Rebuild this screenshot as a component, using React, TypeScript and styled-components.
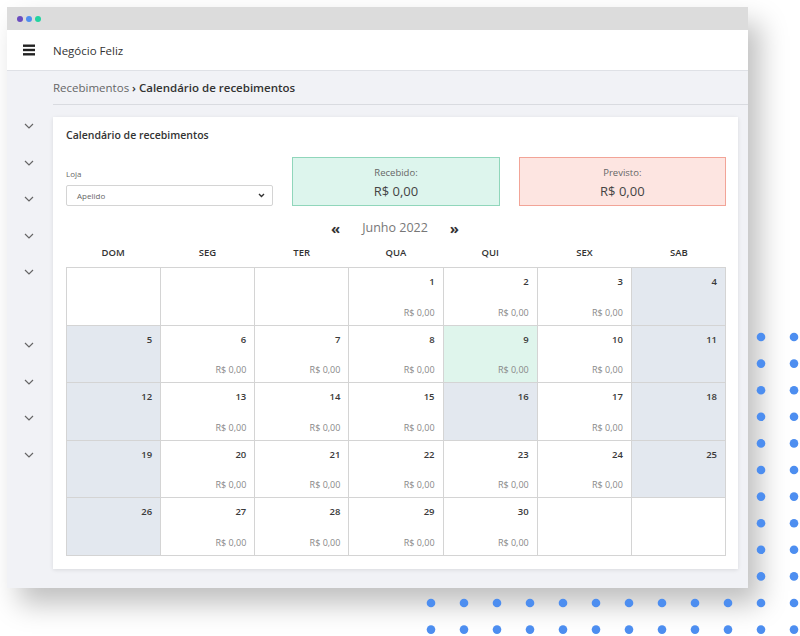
import React from "react";
import styled, { createGlobalStyle } from "styled-components";

const GlobalStyle = createGlobalStyle`
  html, body {
    margin: 0;
    padding: 0;
    background: #ffffff;
  }
  body {
    font-family: "Open Sans", "Liberation Sans", sans-serif;
    color: #333;
  }
  * {
    box-sizing: border-box;
  }
`;

const Stage = styled.div`
  position: relative;
  width: 800px;
  height: 636px;
  padding: 7px;
  overflow: hidden;
  isolation: isolate;
`;

const Dots = styled.svg`
  position: absolute;
  left: 426px;
  top: 332px;
`;

const Window = styled.div`
  position: relative;
  width: 741px;
  height: 581px;
  display: flex;
  flex-direction: column;
  background: #f1f2f6;

  &::before {
    content: "";
    position: absolute;
    inset: 0;
    z-index: -1;
    box-shadow: 12px 16px 26px rgba(0, 0, 0, 0.25);
  }
`;

const TitleBar = styled.div`
  height: 23px;
  background: #dcdcdc;
  display: flex;
  align-items: center;
  gap: 3px;
  padding-left: 10px;
`;

const Light = styled.span<{ $color: string }>`
  width: 6px;
  height: 6px;
  border-radius: 50%;
  background: ${(p) => p.$color};
`;

const Header = styled.div`
  height: 41px;
  background: #ffffff;
  border-bottom: 1px solid #dfe1e6;
  display: flex;
  align-items: center;
`;

const BurgerSlot = styled.div`
  width: 46px;
  display: flex;
  justify-content: center;
  padding-right: 2px;
`;

const Brand = styled.div`
  font-size: 11.5px;
  color: #333;
`;

const Body = styled.div`
  flex: 1;
  display: grid;
  grid-template-columns: 46px 1fr;
`;

const Sidebar = styled.div`
  padding-top: 37px;
  display: flex;
  flex-direction: column;
`;

const SideItem = styled.div`
  height: 36.5px;
  display: flex;
  align-items: center;
  justify-content: center;
  padding-right: 3px;
`;

const Main = styled.div`
  display: flex;
  flex-direction: column;
`;

const Breadcrumb = styled.div`
  height: 34px;
  border-bottom: 1px solid #d9dbe0;
  display: flex;
  align-items: center;
  font-size: 11.5px;
  color: #666;
  padding-bottom: 1px;

  b {
    font-weight: 600;
    color: #333;
  }
`;

const Card = styled.div`
  margin: 12px 10px 0 0;
  background: #ffffff;
  box-shadow: 0 1px 4px rgba(0, 0, 0, 0.1);
  padding: 10px 12px 13px 13px;
`;

const Title = styled.div`
  font-size: 10.5px;
  font-weight: 600;
  line-height: 16px;
  color: #333;
  margin-bottom: 14px;
`;

const Filters = styled.div`
  display: grid;
  grid-template-columns: repeat(3, 1fr);
  gap: 19px;
  height: 49px;
`;

const Field = styled.div`
  display: flex;
  flex-direction: column;
  justify-content: flex-end;
`;

const FieldLabel = styled.div`
  font-size: 8px;
  line-height: 12px;
  color: #666;
  margin-bottom: 5px;
`;

const SelectBox = styled.div`
  position: relative;
  height: 21px;
  border: 1px solid #d4d4d4;
  border-radius: 2px;
  display: flex;
  align-items: center;
  padding-left: 10px;
  font-size: 8px;
  color: #666;

  svg {
    position: absolute;
    right: 7px;
    top: 7px;
  }
`;

const Summary = styled.div<{ $bg: string; $border: string }>`
  background: ${(p) => p.$bg};
  border: 1px solid ${(p) => p.$border};
  display: flex;
  flex-direction: column;
  align-items: center;
  padding-top: 8px;
`;

const SummaryLabel = styled.div`
  font-size: 9.5px;
  line-height: 14px;
  color: #666;
`;

const SummaryValue = styled.div`
  font-size: 13px;
  line-height: 18px;
  color: #444;
  margin-top: 2px;
`;

const MonthNav = styled.div`
  margin-top: 10px;
  height: 22px;
  display: flex;
  align-items: center;
  justify-content: center;
  gap: 22px;
  padding-right: 2px;
`;

const Arrow = styled.span`
  font-size: 15px;
  font-weight: 700;
  color: #333;
  line-height: 1;
  margin-top: 3px;
`;

const MonthLabel = styled.span`
  font-size: 12.5px;
  color: #777;
`;

const WeekRow = styled.div`
  height: 29px;
  display: grid;
  grid-template-columns: repeat(7, 1fr);
  align-items: center;
  padding-bottom: 1px;
`;

const WeekDay = styled.div`
  text-align: center;
  font-size: 9.5px;
  font-weight: 600;
  color: #333;
`;

const Grid = styled.div`
  height: 289px;
  display: grid;
  grid-template-columns: repeat(7, 1fr);
  grid-template-rows: repeat(5, 1fr);
  border-top: 1px solid #d4d4d4;
  border-left: 1px solid #d4d4d4;
`;

type Tone = "plain" | "weekend" | "paid";

const Cell = styled.div<{ $tone: Tone }>`
  border-right: 1px solid #d4d4d4;
  border-bottom: 1px solid #d4d4d4;
  background: ${(p) =>
    p.$tone === "weekend" ? "#e3e8ef" : p.$tone === "paid" ? "#dff5ec" : "#ffffff"};
  display: flex;
  flex-direction: column;
  justify-content: space-between;
  align-items: flex-end;
  padding: 6px 8px 5px;
`;

const DayNum = styled.div`
  font-size: 9.5px;
  font-weight: 600;
  line-height: 15px;
  color: #3a3a3a;
`;

const Amount = styled.div`
  font-size: 9px;
  line-height: 14px;
  color: #888;
`;

const Chevron = () => (
  <svg width="10" height="6" viewBox="0 0 10 6">
    <polyline points="1,1 5,5 9,1" fill="none" stroke="#666" strokeWidth="1.2" />
  </svg>
);

const Burger = () => (
  <svg width="12" height="12" viewBox="0 0 12 12">
    <rect x="0" y="0.5" width="12" height="2.4" fill="#222" />
    <rect x="0" y="4.8" width="12" height="2.4" fill="#222" />
    <rect x="0" y="9.1" width="12" height="2.4" fill="#222" />
  </svg>
);

const weekDays = ["DOM", "SEG", "TER", "QUA", "QUI", "SEX", "SAB"];
const sideItems = [true, true, true, true, true, false, true, true, true, true];

const holidays = [16];
const paidDays = [9];
const startOffset = 3;

const cells = Array.from({ length: 35 }, (_, i) => {
  const day = i - startOffset + 1;
  const col = i % 7;
  if (day < 1 || day > 30) return { key: i, day: 0, tone: "plain" as Tone, amount: false };
  const weekend = col === 0 || col === 6;
  const holiday = holidays.includes(day);
  const tone: Tone = weekend || holiday ? "weekend" : paidDays.includes(day) ? "paid" : "plain";
  return { key: i, day, tone, amount: !weekend && !holiday };
});

const dotCols = Array.from({ length: 12 }, (_, i) => 5 + i * 33);
const dotRows = Array.from({ length: 12 }, (_, i) => 5 + i * 26.6);

export default function App() {
  return (
    <>
      <GlobalStyle />
      <Stage>
        <Dots width="374" height="304" viewBox="0 0 374 304">
          {dotRows.map((cy) =>
            dotCols.map((cx) => <circle key={`${cx}-${cy}`} cx={cx} cy={cy} r="4.3" fill="#4d8ef0" />)
          )}
        </Dots>
        <Window>
          <TitleBar>
            <Light $color="#6a4cbf" />
            <Light $color="#4f8ef0" />
            <Light $color="#22d3a0" />
          </TitleBar>
          <Header>
            <BurgerSlot>
              <Burger />
            </BurgerSlot>
            <Brand>Negócio Feliz</Brand>
          </Header>
          <Body>
            <Sidebar>
              {sideItems.map((show, i) => (
                <SideItem key={i}>{show && <Chevron />}</SideItem>
              ))}
            </Sidebar>
            <Main>
              <Breadcrumb>
                Recebimentos&nbsp;<b>› Calendário de recebimentos</b>
              </Breadcrumb>
              <Card>
                <Title>Calendário de recebimentos</Title>
                <Filters>
                  <Field>
                    <FieldLabel>Loja</FieldLabel>
                    <SelectBox>
                      Apelido
                      <svg width="7" height="5" viewBox="0 0 7 5">
                        <polyline points="1,1 3.5,3.5 6,1" fill="none" stroke="#333" strokeWidth="1.4" />
                      </svg>
                    </SelectBox>
                  </Field>
                  <Summary $bg="#ddf5ed" $border="#90d6bb">
                    <SummaryLabel>Recebido:</SummaryLabel>
                    <SummaryValue>R$ 0,00</SummaryValue>
                  </Summary>
                  <Summary $bg="#fde5e1" $border="#f2a497">
                    <SummaryLabel>Previsto:</SummaryLabel>
                    <SummaryValue>R$ 0,00</SummaryValue>
                  </Summary>
                </Filters>
                <MonthNav>
                  <Arrow>«</Arrow>
                  <MonthLabel>Junho 2022</MonthLabel>
                  <Arrow>»</Arrow>
                </MonthNav>
                <WeekRow>
                  {weekDays.map((d) => (
                    <WeekDay key={d}>{d}</WeekDay>
                  ))}
                </WeekRow>
                <Grid>
                  {cells.map((c) => (
                    <Cell key={c.key} $tone={c.tone}>
                      <DayNum>{c.day ? c.day : ""}</DayNum>
                      {c.amount && <Amount>R$ 0,00</Amount>}
                    </Cell>
                  ))}
                </Grid>
              </Card>
            </Main>
          </Body>
        </Window>
      </Stage>
    </>
  );
}
